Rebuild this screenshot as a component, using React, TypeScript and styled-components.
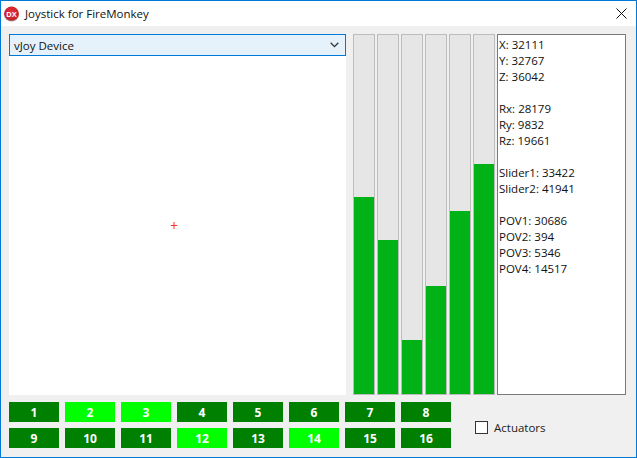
import React from "react";
import styled, { createGlobalStyle } from "styled-components";

const Global = createGlobalStyle`
  html, body { margin: 0; padding: 0; background: #fff; }
  * { box-sizing: border-box; }
`;

const Window = styled.div`
  width: 637px;
  height: 458px;
  border: 1px solid #0078d7;
  background: #f0f0f0;
  display: flex;
  flex-direction: column;
  font-family: "Open Sans", "Noto Sans", sans-serif;
  font-size: 11.5px;
  color: #000;
  overflow: hidden;
`;

const TitleBar = styled.div`
  height: 25px;
  background: #fff;
  display: flex;
  align-items: center;
  padding-left: 3px;
  gap: 5px;
`;

const TitleText = styled.span`
  flex: 1;
  font-size: 11.5px;
  color: #111;
`;

const CloseButton = styled.div`
  width: 30px;
  height: 25px;
  display: flex;
  align-items: center;
  justify-content: center;
`;

const Content = styled.div`
  flex: 1;
  display: flex;
  flex-direction: column;
  padding: 8px 9px 8px 8px;
`;

const TopArea = styled.div`
  height: 361px;
  display: flex;
`;

const LeftColumn = styled.div`
  width: 337px;
  display: flex;
  flex-direction: column;
  margin-right: 7px;
`;

const Combo = styled.div`
  height: 22px;
  flex: none;
  border: 1px solid #0078d7;
  background: #e5f1fb;
  display: flex;
  align-items: center;
  justify-content: space-between;
  padding: 0 6px 0 4px;
  color: #111;
`;

const Canvas = styled.div`
  flex: 1;
  background: #fff;
  display: flex;
  align-items: center;
  justify-content: center;
`;

const Crosshair = styled.svg`
  width: 7px;
  height: 7px;
  display: block;
  transform: translate(-3.5px, 0);
`;

const Bars = styled.div`
  display: flex;
  gap: 2px;
  margin-right: 2px;
`;

const Bar = styled.div`
  width: 22px;
  height: 100%;
  background: #e6e6e6;
  border: 1px solid #bcbcbc;
  display: flex;
  flex-direction: column;
  justify-content: flex-end;
`;

const BarFill = styled.div`
  background: #00b216;
`;

const Memo = styled.div`
  width: 129px;
  height: 100%;
  background: #fff;
  border: 1px solid #7a7a7a;
  padding: 2px 1px;
  line-height: 16px;
  color: #111;
`;

const MemoLine = styled.div`
  height: 16px;
  white-space: nowrap;
`;

const BottomArea = styled.div`
  margin-top: 7px;
  display: flex;
  align-items: center;
`;

const ButtonGrid = styled.div`
  display: grid;
  grid-template-columns: repeat(8, 50px);
  grid-auto-rows: 20px;
  column-gap: 6px;
  row-gap: 6px;
`;

const JoyButton = styled.div<{ $on: boolean }>`
  background: ${(p) => (p.$on ? "#00ff00" : "#008000")};
  color: #fff;
  font-family: "Noto Sans", "Open Sans", sans-serif;
  font-weight: 700;
  font-size: 12px;
  display: flex;
  align-items: center;
  justify-content: center;
`;

const CheckRow = styled.label`
  display: flex;
  align-items: center;
  margin: 5px 0 0 24px;
  color: #222;
`;

const CheckBox = styled.span`
  width: 13px;
  height: 13px;
  background: #fff;
  border: 1px solid #333;
  margin-right: 6px;
`;

const memo = [
  "X: 32111", "Y: 32767", "Z: 36042", "",
  "Rx: 28179", "Ry: 9832", "Rz: 19661", "",
  "Slider1: 33422", "Slider2: 41941", "",
  "POV1: 30686", "POV2: 394", "POV3: 5346", "POV4: 14517",
];

const barValues = [197, 154, 54, 108, 183, 230];
const litButtons = [2, 3, 12, 14];

export default function App() {
  return (
    <>
      <Global />
      <Window>
        <TitleBar>
          <svg width="16" height="16" viewBox="0 0 16 16">
            <defs>
              <radialGradient id="dx" cx="50%" cy="40%" r="60%">
                <stop offset="0%" stopColor="#e8323c" />
                <stop offset="80%" stopColor="#c8202c" />
                <stop offset="100%" stopColor="#9a9a9a" />
              </radialGradient>
            </defs>
            <circle cx="7.5" cy="8" r="7.5" fill="url(#dx)" />
            <text x="7.5" y="10.5" textAnchor="middle" fontSize="7.5" fontWeight="700" fill="#fff" fontFamily="Liberation Sans, sans-serif">DX</text>
          </svg>
          <TitleText>Joystick for FireMonkey</TitleText>
          <CloseButton>
            <svg width="11" height="11" viewBox="0 0 11 11">
              <path d="M0.5 0.5L10.5 10.5M10.5 0.5L0.5 10.5" stroke="#111" strokeWidth="1" fill="none" />
            </svg>
          </CloseButton>
        </TitleBar>
        <Content>
          <TopArea>
            <LeftColumn>
              <Combo>
                <span>vJoy Device</span>
                <svg width="9" height="6" viewBox="0 0 9 6">
                  <path d="M0.7 0.8L4.5 4.6L8.3 0.8" stroke="#333" strokeWidth="1.3" fill="none" />
                </svg>
              </Combo>
              <Canvas>
                <Crosshair viewBox="0 0 7 7">
                  <path d="M3.5 0V7M0 3.5H7" stroke="#ff3333" strokeWidth="1" fill="none" />
                </Crosshair>
              </Canvas>
            </LeftColumn>
            <Bars>
              {barValues.map((v, i) => (
                <Bar key={i}>
                  <BarFill style={{ height: v }} />
                </Bar>
              ))}
            </Bars>
            <Memo>
              {memo.map((l, i) => (
                <MemoLine key={i}>{l}</MemoLine>
              ))}
            </Memo>
          </TopArea>
          <BottomArea>
            <ButtonGrid>
              {Array.from({ length: 16 }, (_, i) => i + 1).map((n) => (
                <JoyButton key={n} $on={litButtons.includes(n)}>{n}</JoyButton>
              ))}
            </ButtonGrid>
            <CheckRow>
              <CheckBox />
              Actuators
            </CheckRow>
          </BottomArea>
        </Content>
      </Window>
    </>
  );
}
